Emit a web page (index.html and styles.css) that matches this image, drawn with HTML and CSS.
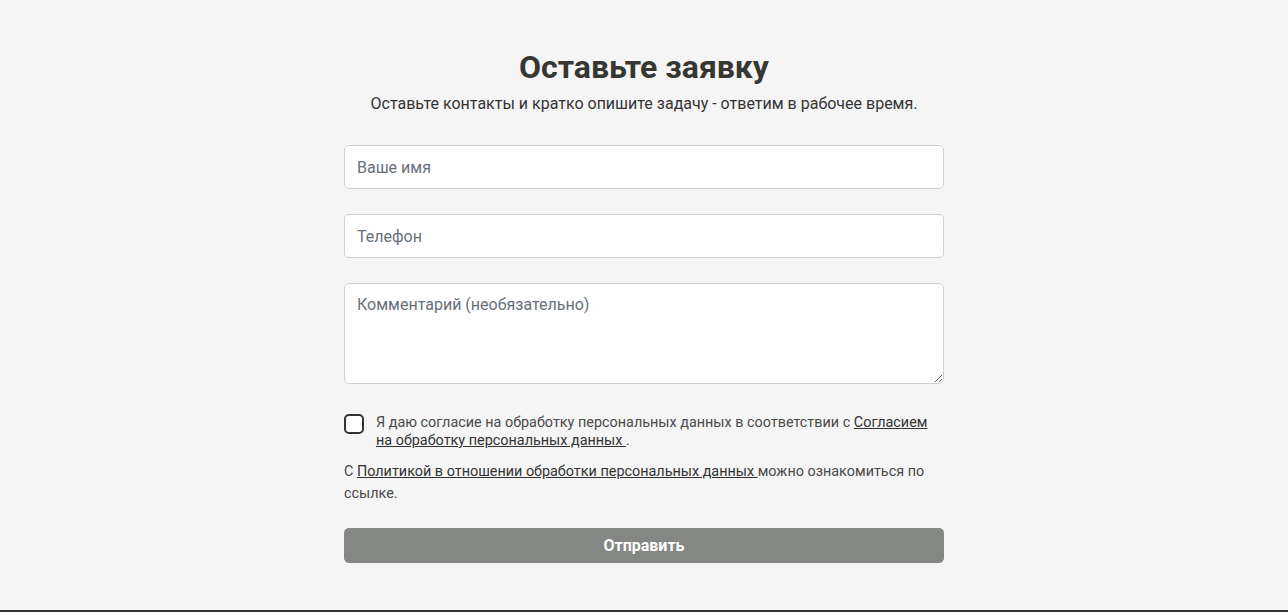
FILE: index.html
```html
<!DOCTYPE html>
<html lang="ru">
<head>
<meta charset="utf-8">
<title>Оставьте заявку</title>
<link rel="stylesheet" href="styles.css">
</head>
<body>
<section class="request">
  <h2 class="request-title">Оставьте заявку</h2>
  <p class="request-sub">Оставьте контакты и кратко опишите задачу - ответим в рабочее время.</p>
  <form class="request-form" onsubmit="return false">
    <input class="field" type="text" placeholder="Ваше имя">
    <input class="field" type="tel" placeholder="Телефон">
    <textarea class="field field-area" placeholder="Комментарий (необязательно)"></textarea>
    <label class="agree">
      <input class="agree-box" type="checkbox">
      <span class="agree-text">Я даю согласие на обработку персональных данных в соответствии с <a href="#">Согласием на обработку персональных данных </a>.</span>
    </label>
    <p class="policy">С <a href="#">Политикой в отношении обработки персональных данных </a>можно ознакомиться по ссылке.</p>
    <button class="send" type="submit">Отправить</button>
  </form>
</section>
<footer class="footer"></footer>
</body>
</html>
```

FILE: styles.css
```css
html, body {
	margin:0;
	padding:0;
	background:#f5f5f5;
	font-family:Roboto, "Liberation Sans", sans-serif;
	color:#333;
}
.request {
	width:600px;
	margin:0 auto;
	padding:48px 0 47px;
}
.request-title {
	margin:0;
	font-size:32px;
	line-height:38px;
	font-weight:700;
	text-align:center;
	color:#363733;
}
.request-sub {
	margin:6px 0 29px;
	font-size:16px;
	line-height:24px;
	text-align:center;
	color:#333;
}
.request-form {
	display:flex;
	flex-direction:column;
}
.field {
	box-sizing:border-box;
	width:100%;
	height:44px;
	margin:0 0 25px;
	padding:0 12px;
	border:1px solid #cfcfcf;
	border-radius:5px;
	background:#fff;
	font-family:inherit;
	font-size:16px;
	color:#333;
	outline:none;
}
.field::placeholder {
	color:#68707a;
}
.field-area {
	height:101px;
	margin-bottom:30px;
	padding-top:11px;
	resize:vertical;
}
.agree {
	display:flex;
	align-items:flex-start;
	gap:12px;
	cursor:pointer;
}
.agree-box {
	appearance:none;
	-webkit-appearance:none;
	flex:none;
	box-sizing:border-box;
	width:20px;
	height:20px;
	margin:0;
	border:2px solid #333;
	border-radius:5px;
	background:#fff;
	cursor:pointer;
}
.agree-text {
	font-size:14.4px;
	line-height:18px;
	color:#4a4a4a;
}
.agree-text a, .policy a {
	color:#333;
	text-decoration:underline;
}
.policy {
	margin:11px 0 23px;
	font-size:14.4px;
	line-height:22px;
	color:#4a4a4a;
}
.send {
	height:35px;
	border:none;
	border-radius:5px;
	background:#858784;
	color:#fff;
	font-family:inherit;
	font-size:16px;
	font-weight:700;
	cursor:pointer;
}
.footer {
	height:2px;
	background:#333;
}
```
